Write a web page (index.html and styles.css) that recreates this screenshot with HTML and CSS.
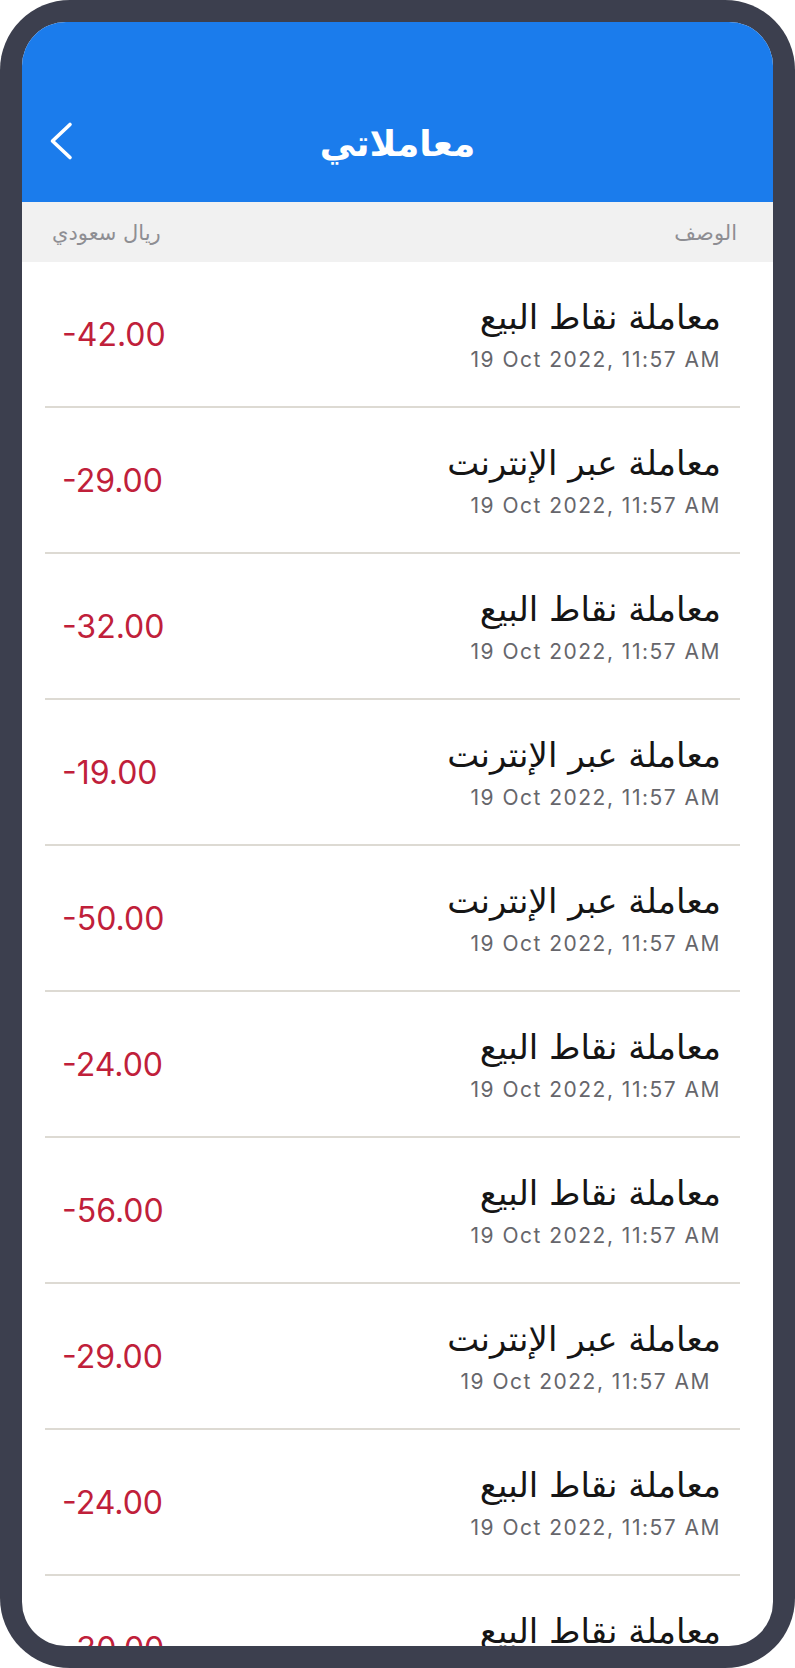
FILE: index.html
```html
<!DOCTYPE html>
<html lang="ar" dir="rtl">
<head>
    <meta charset="UTF-8">
    <meta name="viewport" content="width=device-width, initial-scale=1.0">
    <title>معاملاتي</title>
    <link rel="stylesheet" href="styles.css">
</head>
<body>
    <div class="phone">
        <div class="screen">
            <!-- Шапка -->
            <header class="topbar">
                <div class="nav">
                    <span></span>
                    <h1 class="title">معاملاتي</h1>
                    <button class="back" aria-label="رجوع">
                        <svg width="24" height="40" viewBox="0 0 24 40">
                            <polyline points="21,3.5 3.5,20 21,36.5" fill="none" stroke="#fff" stroke-width="3.6" stroke-linecap="round" stroke-linejoin="round"/>
                        </svg>
                    </button>
                </div>
            </header>

            <!-- Заголовки колонок -->
            <div class="columns">
                <span>الوصف</span>
                <span>ريال سعودي</span>
            </div>

            <!-- Список транзакций -->
            <ul class="list">
                <li class="row">
                    <div class="info">
                        <div class="name">معاملة نقاط البيع</div>
                        <div class="date">19 Oct 2022, 11:57 AM</div>
                    </div>
                    <div class="amount">-42.00</div>
                </li>
                <li class="row">
                    <div class="info">
                        <div class="name">معاملة عبر الإنترنت</div>
                        <div class="date">19 Oct 2022, 11:57 AM</div>
                    </div>
                    <div class="amount">-29.00</div>
                </li>
                <li class="row">
                    <div class="info">
                        <div class="name">معاملة نقاط البيع</div>
                        <div class="date">19 Oct 2022, 11:57 AM</div>
                    </div>
                    <div class="amount">-32.00</div>
                </li>
                <li class="row">
                    <div class="info">
                        <div class="name">معاملة عبر الإنترنت</div>
                        <div class="date">19 Oct 2022, 11:57 AM</div>
                    </div>
                    <div class="amount">-19.00</div>
                </li>
                <li class="row">
                    <div class="info">
                        <div class="name">معاملة عبر الإنترنت</div>
                        <div class="date">19 Oct 2022, 11:57 AM</div>
                    </div>
                    <div class="amount">-50.00</div>
                </li>
                <li class="row">
                    <div class="info">
                        <div class="name">معاملة نقاط البيع</div>
                        <div class="date">19 Oct 2022, 11:57 AM</div>
                    </div>
                    <div class="amount">-24.00</div>
                </li>
                <li class="row">
                    <div class="info">
                        <div class="name">معاملة نقاط البيع</div>
                        <div class="date">19 Oct 2022, 11:57 AM</div>
                    </div>
                    <div class="amount">-56.00</div>
                </li>
                <li class="row">
                    <div class="info">
                        <div class="name">معاملة عبر الإنترنت</div>
                        <div class="date date--shift">19 Oct 2022, 11:57 AM</div>
                    </div>
                    <div class="amount">-29.00</div>
                </li>
                <li class="row">
                    <div class="info">
                        <div class="name">معاملة نقاط البيع</div>
                        <div class="date">19 Oct 2022, 11:57 AM</div>
                    </div>
                    <div class="amount">-24.00</div>
                </li>
                <li class="row">
                    <div class="info">
                        <div class="name">معاملة نقاط البيع</div>
                        <div class="date">19 Oct 2022, 11:57 AM</div>
                    </div>
                    <div class="amount">-30.00</div>
                </li>
            </ul>
        </div>
    </div>
</body>
</html>
```

FILE: styles.css
```css
/* Общие стили */
body {
    margin: 0;
    background: #fff;
    font-family: 'Inter', 'DejaVu Sans', sans-serif;
}

.phone {
    box-sizing: border-box;
    width: 795px;
    height: 1668px;
    padding: 22px;
    background: #3c3f4e;
    border-radius: 70px;
}

.screen {
    height: 100%;
    background: #fff;
    border-radius: 44px;
    overflow: hidden;
    display: flex;
    flex-direction: column;
}

/* Шапка */
.topbar {
    flex: none;
    height: 180px;
    padding-top: 64px;
    box-sizing: border-box;
    background: #1b7cec;
}

.nav {
    height: 110px;
    display: grid;
    grid-template-columns: 1fr auto 1fr;
    align-items: center;
    padding: 0 27px;
}

.title {
    margin: 6px 0 0;
    color: #fff;
    font-family: 'DejaVu Sans', sans-serif;
    font-size: 36px;
    font-weight: 700;
    line-height: 1;
}

.back {
    justify-self: end;
    padding: 0;
    border: none;
    background: none;
    display: flex;
    cursor: pointer;
}

/* Заголовки колонок */
.columns {
    flex: none;
    height: 60px;
    display: flex;
    justify-content: space-between;
    align-items: center;
    padding: 2px 36px 0 30px;
    box-sizing: border-box;
    background: #f1f1f1;
    color: #8e8e93;
    font-family: 'DejaVu Sans', sans-serif;
    font-size: 21px;
}

/* Список */
.list {
    list-style: none;
    margin: 0;
    padding: 0;
}

.row {
    height: 144px;
    margin: 0 33px 0 23px;
    border-bottom: 2px solid #dddad3;
    display: flex;
    justify-content: space-between;
    align-items: center;
    padding: 0 19px 0 17px;
}

.info {
    display: flex;
    flex-direction: column;
    align-items: flex-start;
    gap: 11px;
}

.name {
    color: #151515;
    font-family: 'DejaVu Sans', sans-serif;
    font-size: 34px;
    line-height: 40px;
}

.date {
    direction: ltr;
    color: #66666b;
    font-size: 21px;
    letter-spacing: 1.5px;
    line-height: 24px;
}

.date--shift {
    margin-right: 10px;
}

.amount {
    direction: ltr;
    color: #c0203a;
    font-size: 32px;
}
```
